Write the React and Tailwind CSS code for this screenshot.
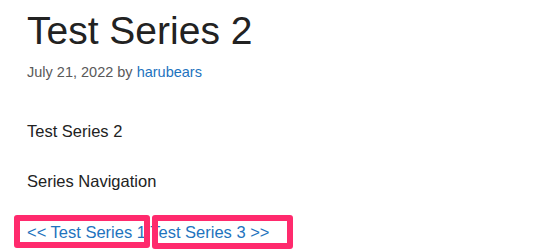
export default function App() {
  return (
    <div className="relative min-h-screen bg-white pl-[27px] pt-[8px] font-['Liberation_Sans',Arial,sans-serif] text-[#222222]">
      <h1 className="text-[39px] leading-[46px] font-normal">Test Series 2</h1>
      <div className="mt-[8px] text-[14.5px] leading-[20px] text-[#595959]">
        July 21, 2022 by{" "}
        <a href="#" className="text-[#1e73be]">
          harubears
        </a>
      </div>
      <p className="mt-[37px] text-[16.5px] leading-[24px]">Test Series 2</p>
      <p className="mt-[26px] text-[16.5px] leading-[24px]">Series Navigation</p>
      <div className="mt-[27px] text-[16.5px] leading-[24px] whitespace-nowrap">
        <a href="#" className="text-[#1e73be]">
          &lt;&lt; Test Series 1
        </a>{" "}
        <a href="#" className="text-[#1e73be]">
          Test Series 3 &gt;&gt;
        </a>
      </div>

      {/* highlight boxes drawn over the nav links */}
      <div className="pointer-events-none absolute left-[14px] top-[215px] h-[33px] w-[136px] rounded-[3px] border-[6px] border-[#ff2a6d]" />
      <div className="pointer-events-none absolute left-[152px] top-[215px] h-[34px] w-[141px] rounded-[3px] border-[6px] border-[#ff2a6d]" />
    </div>
  );
}
